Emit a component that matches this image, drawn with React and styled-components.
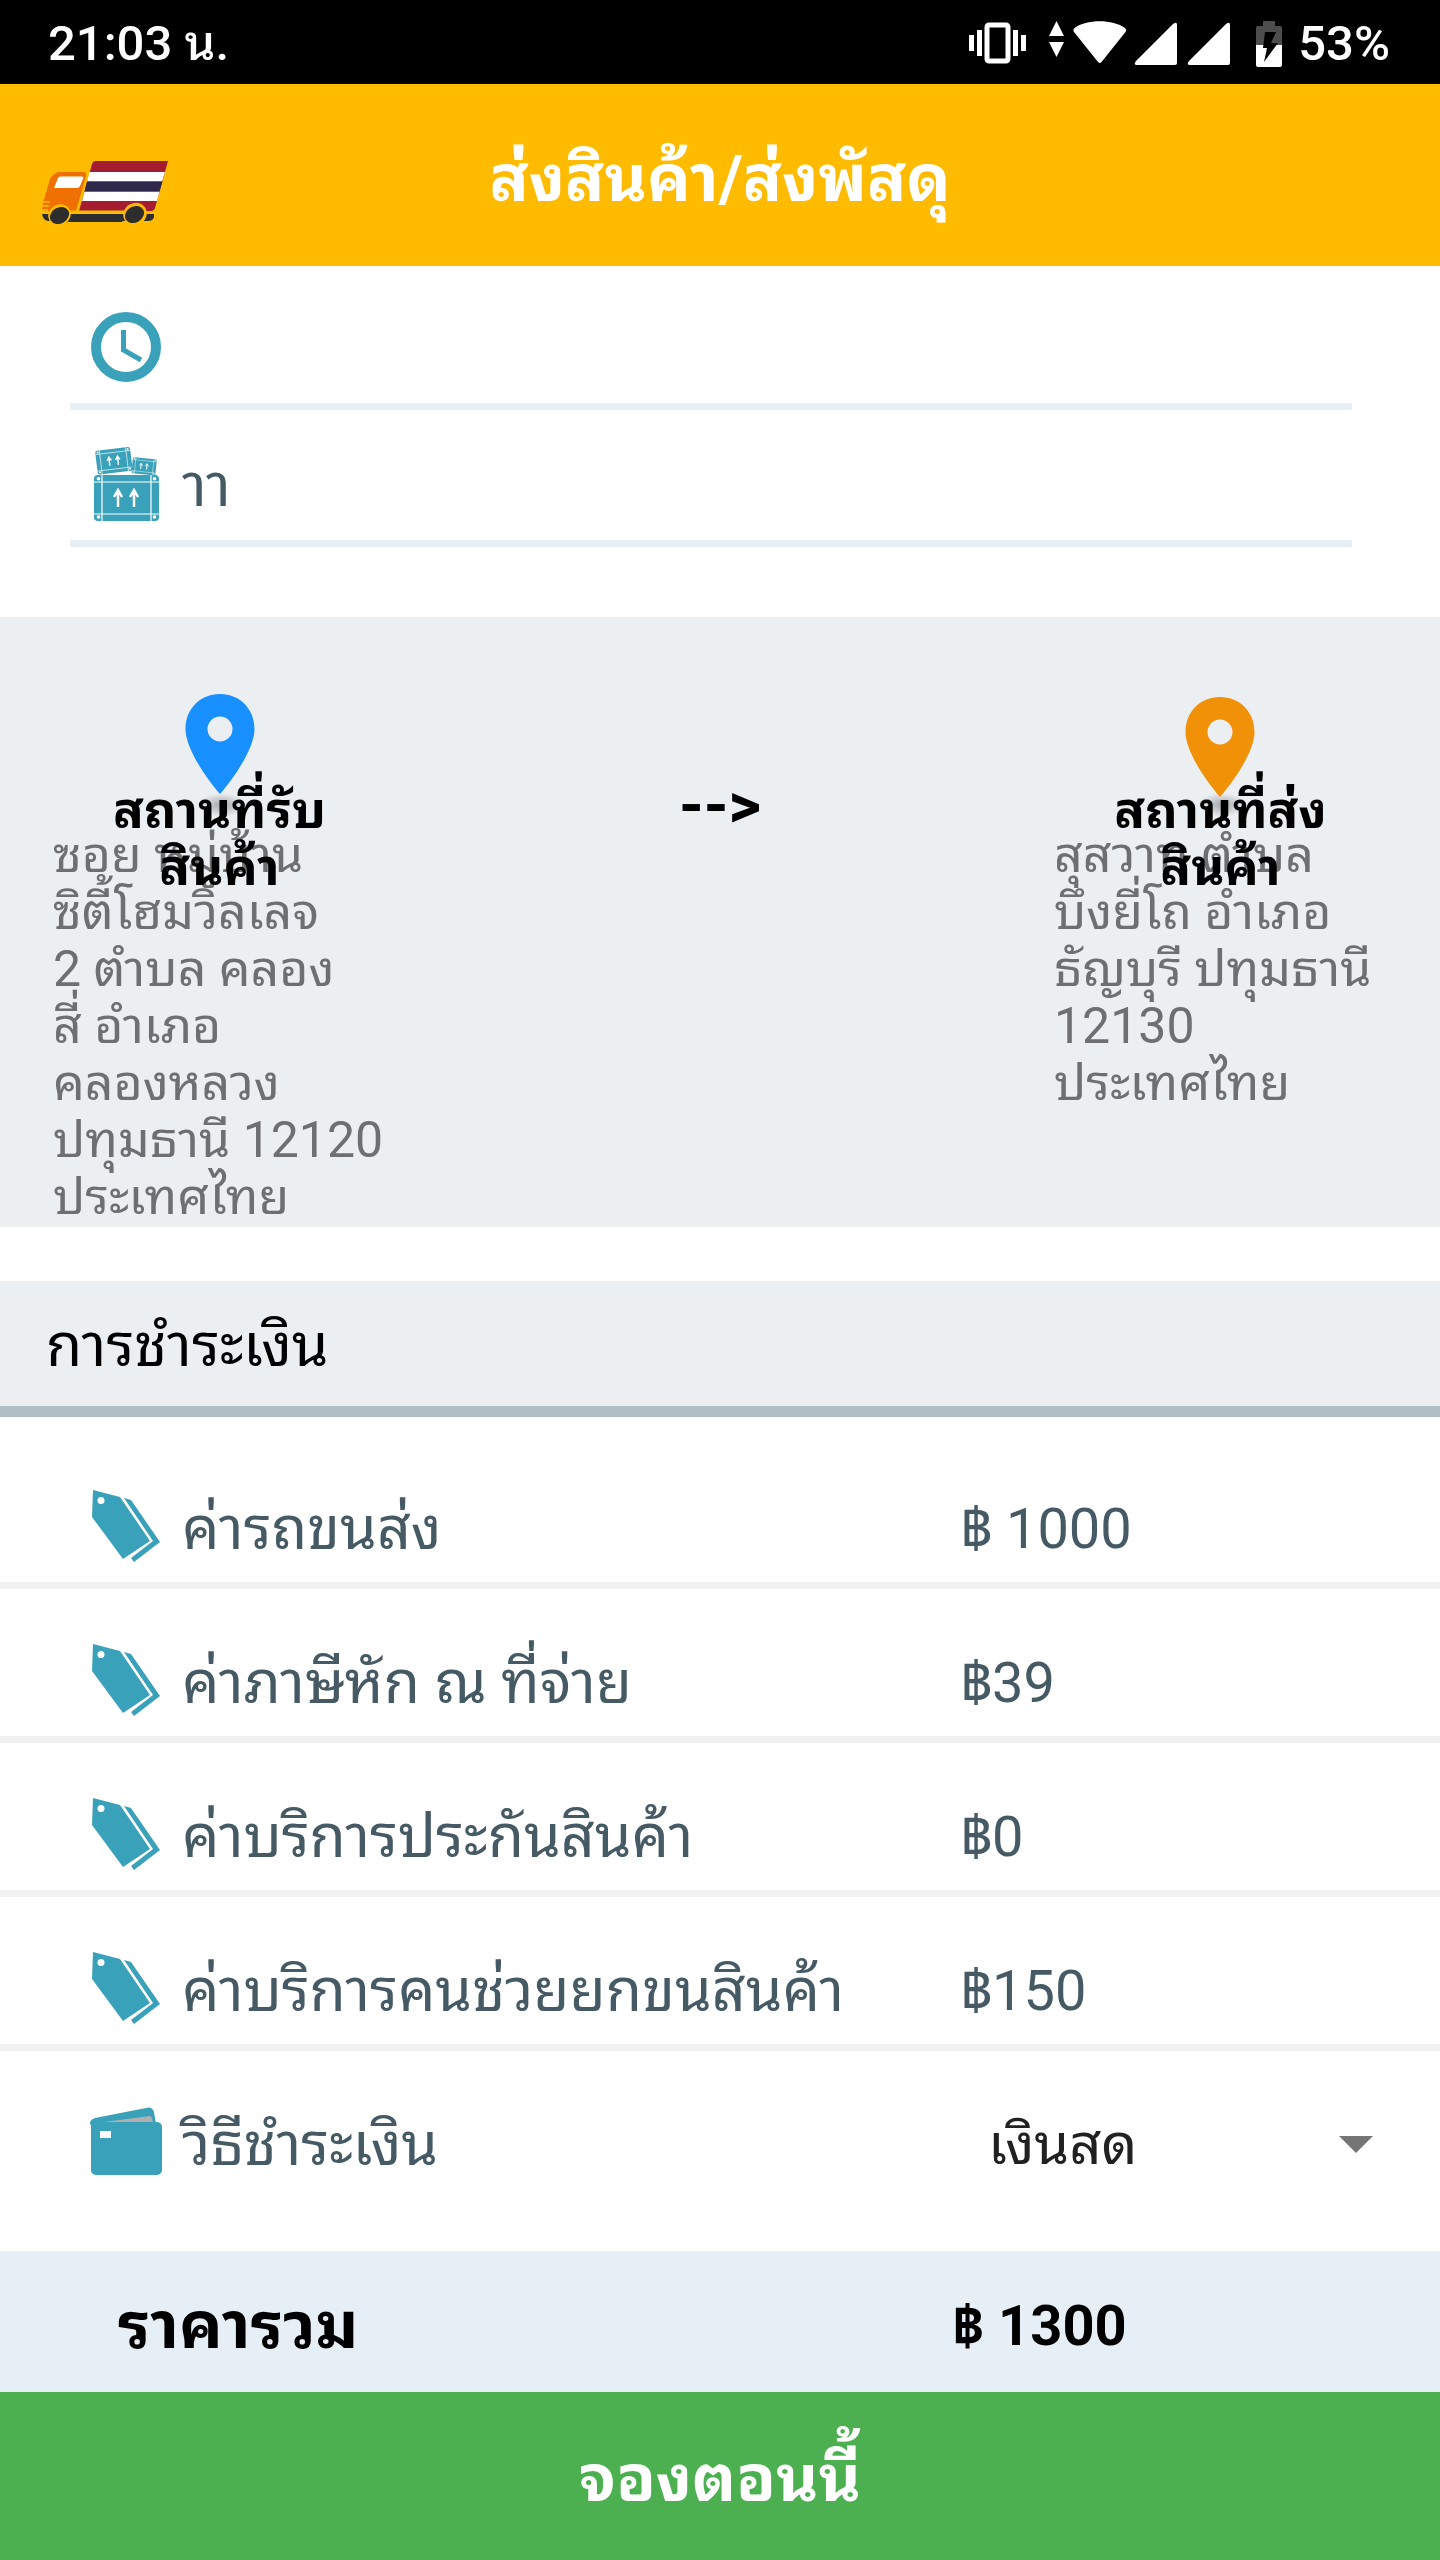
import React, { useState } from 'react';
import styled, { createGlobalStyle } from 'styled-components';

const GlobalStyle = createGlobalStyle`
    * {
        box-sizing: border-box;
    }

    body {
        margin: 0;
        background: #ffffff;
        font-family: Roboto, "Noto Sans Thai Looped", "Noto Sans", sans-serif;
    }
`;

const Screen = styled.div`
    display: flex;
    flex-direction: column;
    min-height: 100vh;
`;

const StatusBar = styled.div`
    display: flex;
    align-items: center;
    justify-content: space-between;
    height: 84px;
    padding: 4px 50px 0 48px;
    background: #000000;
    color: #ffffff;
    font-size: 49px;
    font-weight: 500;
    line-height: 80px;
`;

const StatusIcons = styled.div`
    display: flex;
    align-items: center;
    gap: 16px;

    svg {
        display: block;
    }
`;

const AppHeader = styled.header`
    display: grid;
    grid-template-columns: 1fr auto 1fr;
    height: 182px;
    padding: 8px 42px 0;
    align-items: center;
    background: #ffbb00;
`;

const LogoLink = styled.a`
    display: flex;
    padding-top: 28px;
`;

const Title = styled.h1`
    margin: 0;
    color: #ffffff;
    font-size: 65px;
    font-weight: 700;
    line-height: 84px;
`;

const Fields = styled.div`
    padding: 7px 88px 70px 70px;
`;

const Field = styled.label`
    display: flex;
    align-items: center;
    gap: 19px;
    height: 137px;
    padding: 18px 0 0 20px;
    border-bottom: 7px solid #e6eff5;
`;

const FieldInput = styled.input`
    flex: 1;
    min-width: 0;
    padding: 4px 0 0;
    border: none;
    outline: none;
    background: transparent;
    color: #455a64;
    font-family: inherit;
    font-size: 59px;
    line-height: 80px;
`;

const Route = styled.section`
    display: flex;
    justify-content: space-between;
    padding: 74px 53px 1px;
    background: #ebeff2;
`;

const Place = styled.div`
    position: relative;
    width: 333px;
    padding-top: 136px;
`;

const PlaceHead = styled.div`
    position: absolute;
    top: 0;
    left: 0;
    right: 0;
    display: flex;
    flex-direction: column;
    align-items: center;
`;

const PlaceName = styled.h2`
    margin: -45px 0 0;
    color: #000000;
    font-size: 51px;
    font-weight: 700;
    line-height: 57px;
    text-align: center;
    white-space: pre-line;
`;

const Address = styled.p`
    margin: 0;
    color: #6e6f70;
    font-size: 50px;
    line-height: 57px;
    white-space: pre;
`;

const Arrow = styled.span`
    padding-top: 82px;
    color: #000000;
    font-size: 63px;
    font-weight: 700;
    line-height: 66px;
`;

const SectionTitle = styled.h2`
    margin: 54px 0 0;
    padding: 25px 46px 20px;
    border-bottom: 11px solid #b0bec5;
    background: #ebeff2;
    color: #000000;
    font-size: 59px;
    font-weight: 400;
    line-height: 80px;
`;

const FeeList = styled.ul`
    margin: 0;
    padding: 18px 0 0;
    list-style: none;
`;

const FeeRow = styled.li`
    display: grid;
    grid-template-columns: 73px 1fr 480px;
    column-gap: 19px;
    align-items: center;
    height: 154px;
    padding: 34px 0 0 90px;
    border-bottom: 7px solid #f1f1f1;
    color: #455a64;
    line-height: 80px;
`;

const FeeLabel = styled.span`
    padding-top: 6px;
    font-size: 59px;
`;

const FeePrice = styled.span`
    padding-top: 6px;
    font-size: 56px;
`;

const PaymentRow = styled.div`
    display: grid;
    grid-template-columns: 73px 1fr 452px;
    column-gap: 19px;
    align-items: center;
    height: 200px;
    padding: 34px 0 53px 90px;
    color: #455a64;
    line-height: 80px;
`;

const PaymentLabel = styled.label`
    padding-top: 6px;
    font-size: 59px;
`;

const SelectBox = styled.div`
    display: flex;
    align-items: center;
    padding: 6px 67px 0 0;
`;

const MethodSelect = styled.select`
    flex: 1;
    margin-right: -34px;
    padding: 0 34px 0 0;
    appearance: none;
    border: none;
    outline: none;
    background: transparent;
    color: #212121;
    font-family: inherit;
    font-size: 56px;
    line-height: 80px;
`;

const Caret = styled.span`
    border: 17px solid transparent;
    border-top-color: #757575;
    border-bottom: none;
    pointer-events: none;
`;

const TotalRow = styled.div`
    display: grid;
    grid-template-columns: 1fr 488px;
    align-items: center;
    height: 141px;
    padding: 9px 0 0 118px;
    background: #e7eff6;
    color: #000000;
    font-weight: 700;
    line-height: 84px;
`;

const TotalLabel = styled.span`
    font-size: 65px;
`;

const TotalPrice = styled.span`
    font-size: 56px;
`;

const BookButton = styled.button`
    flex: 1;
    min-height: 168px;
    padding: 5px 0 0;
    border: none;
    background: #4caf50;
    color: #ffffff;
    font-family: inherit;
    font-size: 65px;
    font-weight: 700;
    line-height: 84px;
`;

const TEAL = '#3aa1ba';

const PhoneIcons = () => (
  <svg width="271" height="48" viewBox="0 0 271 48" fill="#fff">
    <rect x="0" y="15" width="5" height="16" />
    <rect x="8" y="10" width="5" height="26" />
    <rect x="18" y="5" width="21" height="36" rx="2" fill="none" stroke="#fff" strokeWidth="5" />
    <rect x="44" y="10" width="5" height="26" />
    <rect x="52" y="15" width="5" height="16" />
    <path d="M87.500 1L95 16H80Z M80 22H95L87.500 37Z" />
    <path d="M105.500 8C117-1 144-1 156 8Q158 10 156.500 12L132.500 42Q131 44 129 42L105 12Q103.500 10 105.500 8Z" />
    <path d="M167 41L204 4Q208 1 208 5V43Q208 45 206 45H168Q164 45 167 41Z" />
    <path d="M220 41L257 4Q261 1 261 5V43Q261 45 259 45H221Q217 45 220 41Z" />
  </svg>
);

const BatteryIcon = () => (
  <svg width="26" height="46" viewBox="0 0 26 46">
    <path d="M7 0H19V5H24Q26 5 26 7V24H0V7Q0 5 2 5H7Z" fill="#4d4d4d" />
    <path d="M0 24H26V44Q26 46 24 46H2Q0 46 0 44Z" fill="#fff" />
    <path d="M9 11H20L15 22H22L8 41L11 27H7Z" fill="#000" />
  </svg>
);

const TruckLogo = () => (
  <svg width="126" height="64" viewBox="0 0 126 64">
    <path d="M53 0H126L113 47Q112 50 109 50H37L50 3Q51 0 53 0Z" fill="#a51b2f" />
    <path d="M47.500 11H123L120 20.500H45Z M42.500 30.500H117.500L115 40H40Z" fill="#fff" />
    <path d="M45 20.500H120.500L117.500 30.500H42.500Z" fill="#2e294b" />
    <path d="M16 11H41Q45 11 44 15L34 50H0L1 42L8 18Q10 14 16 11Z" fill="#ef7000" />
    <path d="M18 15.500H40Q42 15.500 41 18L38 25Q37 27 35 27H12L16 17Q17 15.500 18 15.500Z" fill="#fff" />
    <path d="M0 41H8M0 45H7M0 49H6" stroke="#ffbb00" strokeWidth="1.500" />
    <path d="M0 53H112V56Q111 60 106 60H6Q1 59 0 53Z" fill="#2d2d2d" />
    <path d="M25 53.500H84L80 61H24Z" fill="#2d2d2d" />
    <path d="M28 51H82" stroke="#ffbb00" strokeWidth="3" />
    <ellipse cx="17.500" cy="54" rx="11.500" ry="10.500" transform="rotate(-30 17.500 54)" fill="#ffbb00" />
    <ellipse cx="93" cy="53" rx="12" ry="11" transform="rotate(-30 93 53)" fill="#ffbb00" />
    <ellipse cx="17.500" cy="54.500" rx="10" ry="8" transform="rotate(-30 17.500 54.500)" fill="#2d2d2d" />
    <ellipse cx="92.500" cy="53.500" rx="10" ry="8" transform="rotate(-30 92.500 53.500)" fill="#2d2d2d" />
  </svg>
);

const ClockIcon = () => (
  <svg width="73" height="76" viewBox="0 0 73 76" fill="none" stroke={TEAL}>
    <circle cx="36" cy="38" r="30" strokeWidth="10" />
    <path d="M33.500 21V41L51 51" strokeWidth="5" />
  </svg>
);

const Crate = ({ transform }) => (
  <g transform={transform}>
    <rect width="65" height="46" rx="4" fill={TEAL} />
    <path d="M8 0V46M57 0V46M0 7H65M0 39H65" stroke="#fff" strokeWidth="1.200" fill="none" />
    <g fill="#fff">
      <circle cx="4.500" cy="3.800" r="1.800" />
      <circle cx="60.500" cy="3.800" r="1.800" />
      <circle cx="4.500" cy="42" r="1.800" />
      <circle cx="60.500" cy="42" r="1.800" />
    </g>
    <path d="M24 32V17M20 22L24 15L28 22M40 32V17M36 22L40 15L44 22" stroke="#fff" strokeWidth="2.500" fill="none" />
  </g>
);

const BoxesIcon = () => (
  <svg width="73" height="76" viewBox="0 0 73 76">
    <Crate transform="translate(4 29)" />
    <Crate transform="translate(5 5) rotate(-7) scale(.54 .52)" />
    <Crate transform="translate(43 11) rotate(6) scale(.37 .35)" />
  </svg>
);

const TagIcon = () => (
  <svg width="73" height="76" viewBox="0 0 73 76" fill={TEAL}>
    <path d="M3 2L30 9L60 53L33 71L2 29Z" />
    <circle cx="11" cy="12.500" r="3.500" fill="#fff" />
    <path d="M34 10L41 12L70 54L44 74L41 70L63 53Z" />
  </svg>
);

const WalletIcon = () => (
  <svg width="73" height="76" viewBox="0 0 73 76">
    <path d="M0 19Q0 16 5 14L56 4Q62 2 64 8L66 20L3 28Z" fill={TEAL} />
    <path d="M14 18L60 12Q62 12 63 19Z" fill="#b0b0b0" />
    <rect x="1" y="18" width="71" height="53" rx="5" fill={TEAL} />
    <rect x="10" y="27" width="11" height="7" fill="#fff" />
  </svg>
);

// the pickup pin sits a little higher than the drop-off one
const PinIcon = ({ color, raised }) => (
  <svg width="90" height="136" viewBox="0 0 90 136">
    <defs>
      <radialGradient id="pinShadow">
        <stop offset="0" stopColor="#000" stopOpacity=".3" />
        <stop offset="1" stopColor="#000" stopOpacity="0" />
      </radialGradient>
    </defs>
    <ellipse cx="47" cy="114" rx="24" ry="12" fill="url(#pinShadow)" />
    <path
      d="M45 6C25 6 10.500 21 10.500 41C10.500 61 32 91 45 106C58 91 79.500 61 79.500 41C79.500 21 65 6 45 6ZM45 28.500A12.500 12.500 0 1 1 45 53.500A12.500 12.500 0 1 1 45 28.500Z"
      fill={color}
      transform={raised ? 'translate(0 -3)' : undefined}
    />
  </svg>
);

const places = [
  {
    id: 'pickup',
    name: 'สถานที่รับ\nสินค้า',
    address: 'ซอย หมู่บ้าน\nซิตี้โฮมวิลเลจ\n2 ตำบล คลอง\nสี่ อำเภอ\nคลองหลวง\nปทุมธานี 12120\nประเทศไทย',
    color: '#1890ff',
  },
  {
    id: 'dropoff',
    name: 'สถานที่ส่ง\nสินค้า',
    address: 'สุสวาท ตำบล\nบึงยี่โถ อำเภอ\nธัญบุรี ปทุมธานี\n12130\nประเทศไทย',
    color: '#f09107',
  },
];

const fees = [
  { id: 1, label: 'ค่ารถขนส่ง', price: '฿ 1000' },
  { id: 2, label: 'ค่าภาษีหัก ณ ที่จ่าย', price: '฿39' },
  { id: 3, label: 'ค่าบริการประกันสินค้า', price: '฿0' },
  { id: 4, label: 'ค่าบริการคนช่วยยกขนสินค้า', price: '฿150' },
];

const PlaceCard = ({ place }) => (
  <Place>
    <Address>{place.address}</Address>
    <PlaceHead>
      <PinIcon color={place.color} raised={place.id === 'pickup'} />
      <PlaceName>{place.name}</PlaceName>
    </PlaceHead>
  </Place>
);

const App = () => {
  const [time, setTime] = useState('');
  const [goods, setGoods] = useState('าา');

  return (
    <Screen>
      <GlobalStyle />
      <StatusBar>
        <span>21:03 น.</span>
        <StatusIcons>
          <PhoneIcons />
          <BatteryIcon />
          <span>53%</span>
        </StatusIcons>
      </StatusBar>

      <AppHeader>
        <LogoLink href="#" aria-label="หน้าแรก">
          <TruckLogo />
        </LogoLink>
        <Title>ส่งสินค้า/ส่งพัสดุ</Title>
      </AppHeader>

      <Fields>
        <Field>
          <ClockIcon />
          <FieldInput aria-label="เวลา" value={time} onChange={(e) => setTime(e.target.value)} />
        </Field>
        <Field>
          <BoxesIcon />
          <FieldInput aria-label="สินค้า" value={goods} onChange={(e) => setGoods(e.target.value)} />
        </Field>
      </Fields>

      <Route>
        <PlaceCard place={places[0]} />
        <Arrow>--&gt;</Arrow>
        <PlaceCard place={places[1]} />
      </Route>

      <SectionTitle>การชำระเงิน</SectionTitle>
      <FeeList>
        {fees.map((fee) => (
          <FeeRow key={fee.id}>
            <TagIcon />
            <FeeLabel>{fee.label}</FeeLabel>
            <FeePrice>{fee.price}</FeePrice>
          </FeeRow>
        ))}
      </FeeList>
      <PaymentRow>
        <WalletIcon />
        <PaymentLabel htmlFor="method">วิธีชำระเงิน</PaymentLabel>
        <SelectBox>
          <MethodSelect id="method">
            <option>เงินสด</option>
          </MethodSelect>
          <Caret />
        </SelectBox>
      </PaymentRow>

      <TotalRow>
        <TotalLabel>ราคารวม</TotalLabel>
        <TotalPrice>฿ 1300</TotalPrice>
      </TotalRow>
      <BookButton type="button">จองตอนนี้</BookButton>
    </Screen>
  );
};

export default App;
